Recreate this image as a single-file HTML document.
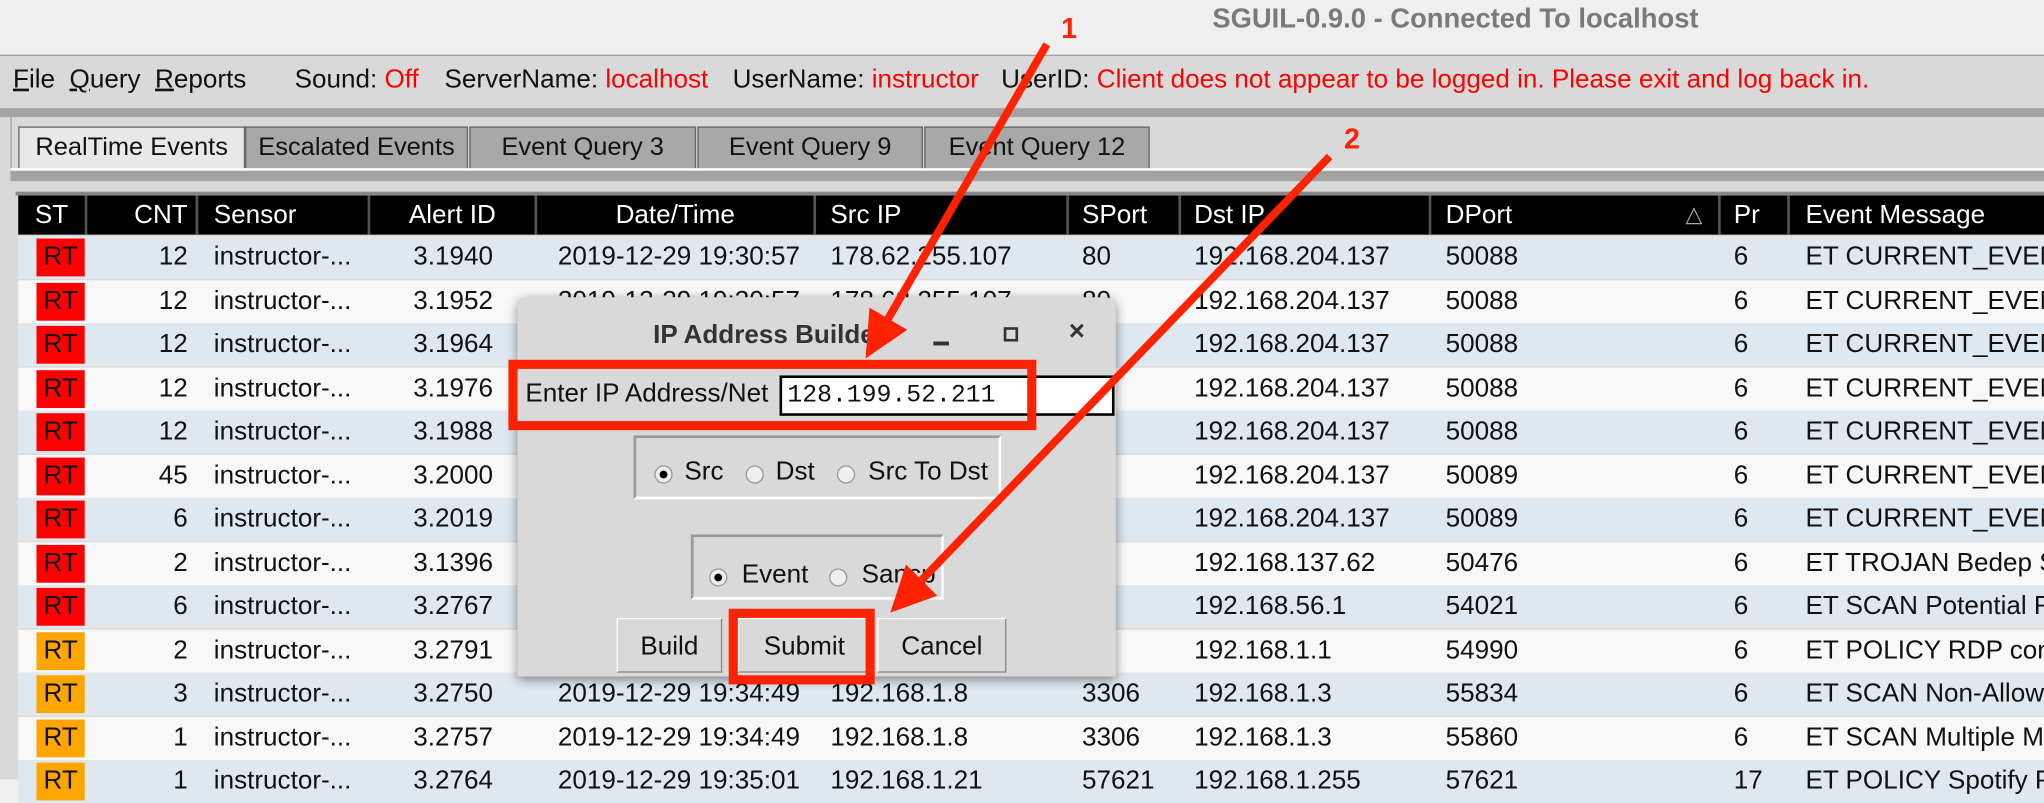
<!DOCTYPE html>
<html><head><meta charset="utf-8"><style>
html,body{margin:0;padding:0;width:2044px;height:780px;overflow:hidden;background:#efefef}
#w{position:absolute;left:0;top:0;width:1568px;height:598px;transform:scale(1.30357);transform-origin:0 0;font-family:"Liberation Sans",sans-serif;font-size:20px;color:#111}
.a{position:absolute;white-space:nowrap}
.r{color:#f00}
.tab{position:absolute;top:97px;height:31px;background:#a8a8a8;border:1px solid #666;border-bottom:none;text-align:center;line-height:31px;font-size:19.5px}
.hd{position:absolute;top:150px;height:30px;background:#000;color:#fff;line-height:30px;border-right:2px solid #555;box-sizing:border-box;white-space:nowrap}
.row{position:absolute;left:14px;width:1554px;height:33px;line-height:33px;white-space:nowrap;overflow:hidden}
.row span{position:absolute;white-space:nowrap}
.rt{left:14px;top:2px;width:37px;height:29px;line-height:29px;text-align:center;background:#f00}
.o .rt{background:#ffa500}
.dl{font-size:20px}
.btn{position:absolute;top:474px;height:42px;line-height:42px;text-align:center;background:#d9d9d9;border:1px solid #fff;border-right-color:#888;border-bottom-color:#888;box-sizing:border-box;font-size:20px}
.rad{position:absolute;width:12px;height:12px;border-radius:50%;border:1px solid #999;background:#eee}
.rad.on:after{content:"";position:absolute;left:3px;top:3px;width:6px;height:6px;border-radius:50%;background:#000}
</style></head><body><div id="w">
<div class="a" style="left:930px;top:3px;font-weight:bold;color:#7a7a7a;font-size:21px">SGUIL-0.9.0 - Connected To localhost</div>
<div class="a" style="left:0;top:42px;width:1568px;height:41px;background:#d9d9d9;border-top:1px solid #a0a0a0"></div>
<div class="a" style="left:10px;top:50px"><u>F</u>ile &nbsp;<u>Q</u>uery &nbsp;<u>R</u>eports</div>
<div class="a" style="left:226px;top:50px">Sound: <span class="r">Off</span></div>
<div class="a" style="left:341px;top:50px">ServerName: <span class="r">localhost</span></div>
<div class="a" style="left:562px;top:50px">UserName: <span class="r">instructor</span></div>
<div class="a" style="left:768px;top:50px">UserID: <span class="r">Client does not appear to be logged in. Please exit and log back in.</span></div>
<div class="a" style="left:0;top:83px;width:1568px;height:7px;background:#a3a3a3"></div>
<div class="a" style="left:0;top:90px;width:1568px;height:508px;background:#d9d9d9"></div>
<div class="a" style="left:8px;top:90px;width:1560px;height:42px;background:#d9d9d9;border-left:1px solid #a3a3a3"></div>
<div class="tab" style="left:14px;width:172px;background:#e8e8e8">RealTime Events</div>
<div class="tab" style="left:188px;width:169px">Escalated Events</div>
<div class="tab" style="left:360px;width:172px">Event Query 3</div>
<div class="tab" style="left:535px;width:171px">Event Query 9</div>
<div class="tab" style="left:709px;width:171px">Event Query 12</div>
<div class="a" style="left:8px;top:129px;width:1560px;height:2px;background:#fff"></div>
<div class="a" style="left:8px;top:131px;width:1560px;height:8px;background:#a3a3a3"></div>
<div class="a" style="left:12px;top:147px;width:1556px;height:3px;background:#888"></div>
<div class="hd" style="left:14px;width:53px;text-align:center">ST</div>
<div class="hd" style="left:67px;width:85px;text-align:right;padding-right:6px">CNT</div>
<div class="hd" style="left:152px;width:132px;padding-left:12px">Sensor</div>
<div class="hd" style="left:284px;width:128px;text-align:center">Alert ID</div>
<div class="hd" style="left:412px;width:214px;text-align:center">Date/Time</div>
<div class="hd" style="left:626px;width:194px;padding-left:11px">Src IP</div>
<div class="hd" style="left:820px;width:86px;padding-left:10px">SPort</div>
<div class="hd" style="left:906px;width:192px;padding-left:10px">Dst IP</div>
<div class="hd" style="left:1098px;width:222px;padding-left:11px">DPort<span style="position:absolute;left:195px;color:#aaa;font-size:17px">△</span></div>
<div class="hd" style="left:1320px;width:53px;padding-left:10px">Pr</div>
<div class="hd" style="left:1373px;width:195px;padding-left:12px;border:none">Event Message</div>
<div id="rows"></div>
<!-- dialog -->
<div class="a" style="left:397px;top:228px;width:459px;height:291px;background:#d9d9d9;border-radius:8px 8px 0 0;box-shadow:0 2px 8px rgba(0,0,0,.45)"></div>
<div class="a" style="left:501px;top:246px;font-weight:bold;font-size:20px;color:#333">IP Address Builder</div>
<div class="a" style="left:716px;top:262px;width:12px;height:3px;background:#333"></div>
<div class="a" style="left:770px;top:251px;width:7px;height:7px;border:2px solid #333"></div>
<div class="a" style="left:820px;top:243px;font-size:21px;font-weight:bold;color:#333">×</div>
<div class="a dl" style="left:403px;top:291px">Enter IP Address/Net</div>
<div class="a" style="left:598px;top:288px;width:249px;height:27px;background:#fff;border:2px solid #000;font-family:'Liberation Mono',monospace;font-size:19px;line-height:27px;padding-left:4px">128.199.52.211</div>
<div class="a" style="left:486px;top:334px;width:278px;height:45px;border:2px solid #999;border-right-color:#fff;border-bottom-color:#fff"></div>
<div class="rad on" style="left:502px;top:357px"></div><div class="a dl" style="left:525px;top:351px">Src</div>
<div class="rad" style="left:572px;top:357px"></div><div class="a dl" style="left:595px;top:351px">Dst</div>
<div class="rad" style="left:642px;top:357px"></div><div class="a dl" style="left:666px;top:351px">Src To Dst</div>
<div class="a" style="left:530px;top:410px;width:190px;height:46px;border:2px solid #999;border-right-color:#fff;border-bottom-color:#fff"></div>
<div class="rad on" style="left:544px;top:436px"></div><div class="a dl" style="left:569px;top:430px">Event</div>
<div class="rad" style="left:636px;top:436px"></div><div class="a dl" style="left:661px;top:430px">Sancp</div>
<div class="btn" style="left:473px;width:81px">Build</div>
<div class="btn" style="left:566px;width:102px">Submit</div>
<div class="btn" style="left:673px;width:99px">Cancel</div>
<div class="a" style="left:390px;top:276px;width:391px;height:40px;border:7px solid #ff2200"></div>
<div class="a" style="left:559px;top:467px;width:98px;height:44px;border:7px solid #ff2200"></div>
<svg class="a" style="left:0;top:0" width="1568" height="598"><g stroke="#ff2200" stroke-width="6" fill="#ff2200">
<line x1="803" y1="34" x2="681" y2="245"/><polygon points="664,275 696,253 667,236" stroke="none"/>
<line x1="1020" y1="120" x2="707" y2="445"/><polygon points="683,470 719,457 695,433" stroke="none"/></g>
<text x="814" y="29" fill="#ff2200" font-family="Liberation Sans" font-weight="bold" font-size="22">1</text>
<text x="1031" y="114" fill="#ff2200" font-family="Liberation Sans" font-weight="bold" font-size="22">2</text></svg>
</div>
<script>
var d=[["12","3.1940","2019-12-29 19:30:57","178.62.255.107","80","192.168.204.137","50088","6","ET CURRENT_EVENTS"],
["12","3.1952","2019-12-29 19:30:57","178.62.255.107","80","192.168.204.137","50088","6","ET CURRENT_EVENTS"],
["12","3.1964","","","","192.168.204.137","50088","6","ET CURRENT_EVENTS"],
["12","3.1976","","","","192.168.204.137","50088","6","ET CURRENT_EVENTS"],
["12","3.1988","","","","192.168.204.137","50088","6","ET CURRENT_EVENTS"],
["45","3.2000","","","","192.168.204.137","50089","6","ET CURRENT_EVENTS"],
["6","3.2019","","","","192.168.204.137","50089","6","ET CURRENT_EVENTS"],
["2","3.1396","","","","192.168.137.62","50476","6","ET TROJAN Bedep SSL"],
["6","3.2767","","","","192.168.56.1","54021","6","ET SCAN Potential RDP"],
["2","3.2791","","","","192.168.1.1","54990","6","ET POLICY RDP connect"],
["3","3.2750","2019-12-29 19:34:49","192.168.1.8","3306","192.168.1.3","55834","6","ET SCAN Non-Allowed"],
["1","3.2757","2019-12-29 19:34:49","192.168.1.8","3306","192.168.1.3","55860","6","ET SCAN Multiple MySQL"],
["1","3.2764","2019-12-29 19:35:01","192.168.1.21","57621","192.168.1.255","57621","17","ET POLICY Spotify P2P"]];
var h="";d.forEach(function(r,i){var t=181+i*33.5;
h+='<div class="row'+(i>=9?' o':'')+'" style="top:'+t+'px;background:'+(i%2?'#f8f8f8':'#dfe7ef')+'">'+
'<span class="rt">RT</span><span style="right:1424px">'+r[0]+'</span><span style="left:150px">instructor-...</span>'+
'<span style="left:303px">'+r[1]+'</span><span style="left:414px">'+r[2]+'</span><span style="left:623px">'+r[3]+'</span>'+
'<span style="left:816px">'+r[4]+'</span><span style="left:902px">'+r[5]+'</span><span style="left:1095px">'+r[6]+'</span>'+
'<span style="left:1316px">'+r[7]+'</span><span style="left:1371px">'+r[8]+'</span></div>';});
document.getElementById("rows").innerHTML=h;
</script>
</body></html>
